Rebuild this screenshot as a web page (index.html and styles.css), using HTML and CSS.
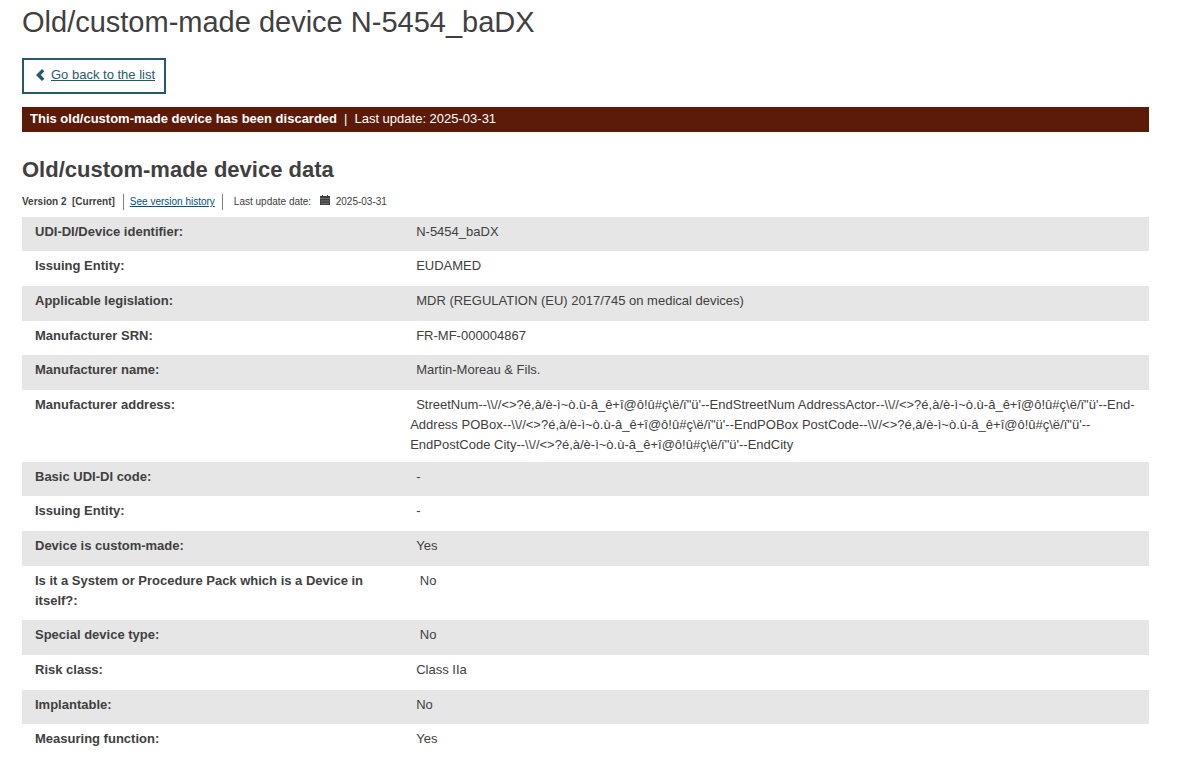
FILE: index.html
```html
<!DOCTYPE html>
<html lang="en">
<head>
    <meta charset="UTF-8">
    <meta name="viewport" content="width=device-width, initial-scale=1.0">
    <title>Old/custom-made device N-5454_baDX</title>
    <link rel="stylesheet" href="styles.css">
</head>
<body>

    <main class="page">
        <h1>Old/custom-made device N-5454_baDX</h1>

        <a href="#" class="back-button">
            <svg class="back-icon" viewBox="0 0 10 12" aria-hidden="true">
                <path d="M9.4 2.3 7 0 1 6l6 6 2.4-2.3L5.8 6z"/>
            </svg>
            <span>Go back to the list</span>
        </a>

        <!-- Status banner -->
        <div class="banner">
            <strong>This old/custom-made device has been discarded</strong>
            <span class="separator">|</span>
            <span>Last update: 2025-03-31</span>
        </div>

        <h2>Old/custom-made device data</h2>

        <!-- Version info -->
        <div class="version-bar">
            <strong class="version">Version 2&nbsp; [Current]</strong>
            <a href="#" class="history-link">See version history</a>
            <span class="update-date">
                Last update date:
                <svg class="calendar-icon" viewBox="0 0 10 10" aria-hidden="true">
                    <path d="M0 1h2V0h1v1h4V0h1v1h2v9H0z"/>
                    <path class="calendar-lines" d="M0 3.5h10M1 6h8M1 8.5h8"/>
                </svg>
                2025-03-31
            </span>
        </div>

        <!-- Device data -->
        <table class="device-data">
            <tbody>
                <tr>
                    <th scope="row">UDI-DI/Device identifier:</th>
                    <td>N-5454_baDX</td>
                </tr>
                <tr>
                    <th scope="row">Issuing Entity:</th>
                    <td>EUDAMED</td>
                </tr>
                <tr>
                    <th scope="row">Applicable legislation:</th>
                    <td>MDR (REGULATION (EU) 2017/745 on medical devices)</td>
                </tr>
                <tr>
                    <th scope="row">Manufacturer SRN:</th>
                    <td>FR-MF-000004867</td>
                </tr>
                <tr>
                    <th scope="row">Manufacturer name:</th>
                    <td>Martin-Moreau &amp; Fils.</td>
                </tr>
                <tr class="address-row">
                    <th scope="row">Manufacturer address:</th>
                    <td>StreetNum--\\//&lt;&gt;?é,à/è-ì~ò.ù-â_ê+î@ô!û#ç\ë/ï"ü'--EndStreetNum AddressActor--\\//&lt;&gt;?é,à/è-ì~ò.ù-â_ê+î@ô!û#ç\ë/ï"ü'--End-Address POBox--\\//&lt;&gt;?é,à/è-ì~ò.ù-â_ê+î@ô!û#ç\ë/ï"ü'--EndPOBox PostCode--\\//&lt;&gt;?é,à/è-ì~ò.ù-â_ê+î@ô!û#ç\ë/ï"ü'--EndPostCode City--\\//&lt;&gt;?é,à/è-ì~ò.ù-â_ê+î@ô!û#ç\ë/ï"ü'--EndCity</td>
                </tr>
                <tr>
                    <th scope="row">Basic UDI-DI code:</th>
                    <td>-</td>
                </tr>
                <tr>
                    <th scope="row">Issuing Entity:</th>
                    <td>-</td>
                </tr>
                <tr>
                    <th scope="row">Device is custom-made:</th>
                    <td>Yes</td>
                </tr>
                <tr>
                    <th scope="row">Is it a System or Procedure Pack which is a Device in itself?:</th>
                    <td>&nbsp;No</td>
                </tr>
                <tr>
                    <th scope="row">Special device type:</th>
                    <td>&nbsp;No</td>
                </tr>
                <tr>
                    <th scope="row">Risk class:</th>
                    <td>Class IIa</td>
                </tr>
                <tr>
                    <th scope="row">Implantable:</th>
                    <td>No</td>
                </tr>
                <tr>
                    <th scope="row">Measuring function:</th>
                    <td>Yes</td>
                </tr>
            </tbody>
        </table>
    </main>

</body>
</html>
```
FILE: styles.css
```css
body {
    font-family: "Liberation Sans", Arial, sans-serif;
    font-size: 13px;
    line-height: 20px;
    color: #404040;
    background-color: #fff;
    margin: 0;
}

.page {
    padding: 4px 34px 0 22px;
}

h1 {
    font-size: 29px;
    font-weight: normal;
    line-height: 36px;
    margin: 0 0 18px;
}

.back-button {
    display: flex;
    align-items: center;
    gap: 6px;
    width: fit-content;
    padding: 5px 9px 7px 11px;
    border: 2px solid #245a6d;
    color: #245a6d;
    text-decoration: none;
}

.back-button span {
    text-decoration: underline;
}

.back-icon {
    width: 10px;
    height: 12px;
    fill: #245a6d;
}

.banner {
    display: flex;
    gap: 7px;
    margin-top: 13px;
    padding: 2px 8px 3px;
    background-color: #5c1a09;
    color: #fff;
}

h2 {
    font-size: 22px;
    line-height: 28px;
    margin: 24px 0 10px;
}

.version-bar {
    display: flex;
    font-size: 10px;
    line-height: 16px;
    margin-bottom: 7px;
}

.version {
    padding-right: 8px;
    border-right: 1px solid #808080;
}

.history-link {
    padding: 0 7px 0 6px;
    border-right: 1px solid #808080;
    color: #00508a;
}

.update-date {
    padding-left: 11px;
}

.calendar-icon {
    width: 10px;
    height: 10px;
    margin: 0 3px 0 6px;
    fill: #404040;
}

.calendar-lines {
    fill: none;
    stroke: #8c8c8c;
    stroke-width: 0.6;
}

.device-data {
    width: 100%;
    border-collapse: collapse;
}

.device-data tr:nth-child(odd) {
    background-color: #e6e6e6;
}

.device-data th,
.device-data td {
    padding: 5px 13px 10px;
    text-align: left;
    vertical-align: top;
}

.device-data th {
    width: 34%;
}

.device-data td {
    padding-left: 5px;
    padding-right: 8px;
    text-indent: 6px;
}

.device-data tr:nth-child(3n+1) > * {
    padding-bottom: 9px;
}

.device-data .address-row > * {
    padding-bottom: 7px;
}
```
